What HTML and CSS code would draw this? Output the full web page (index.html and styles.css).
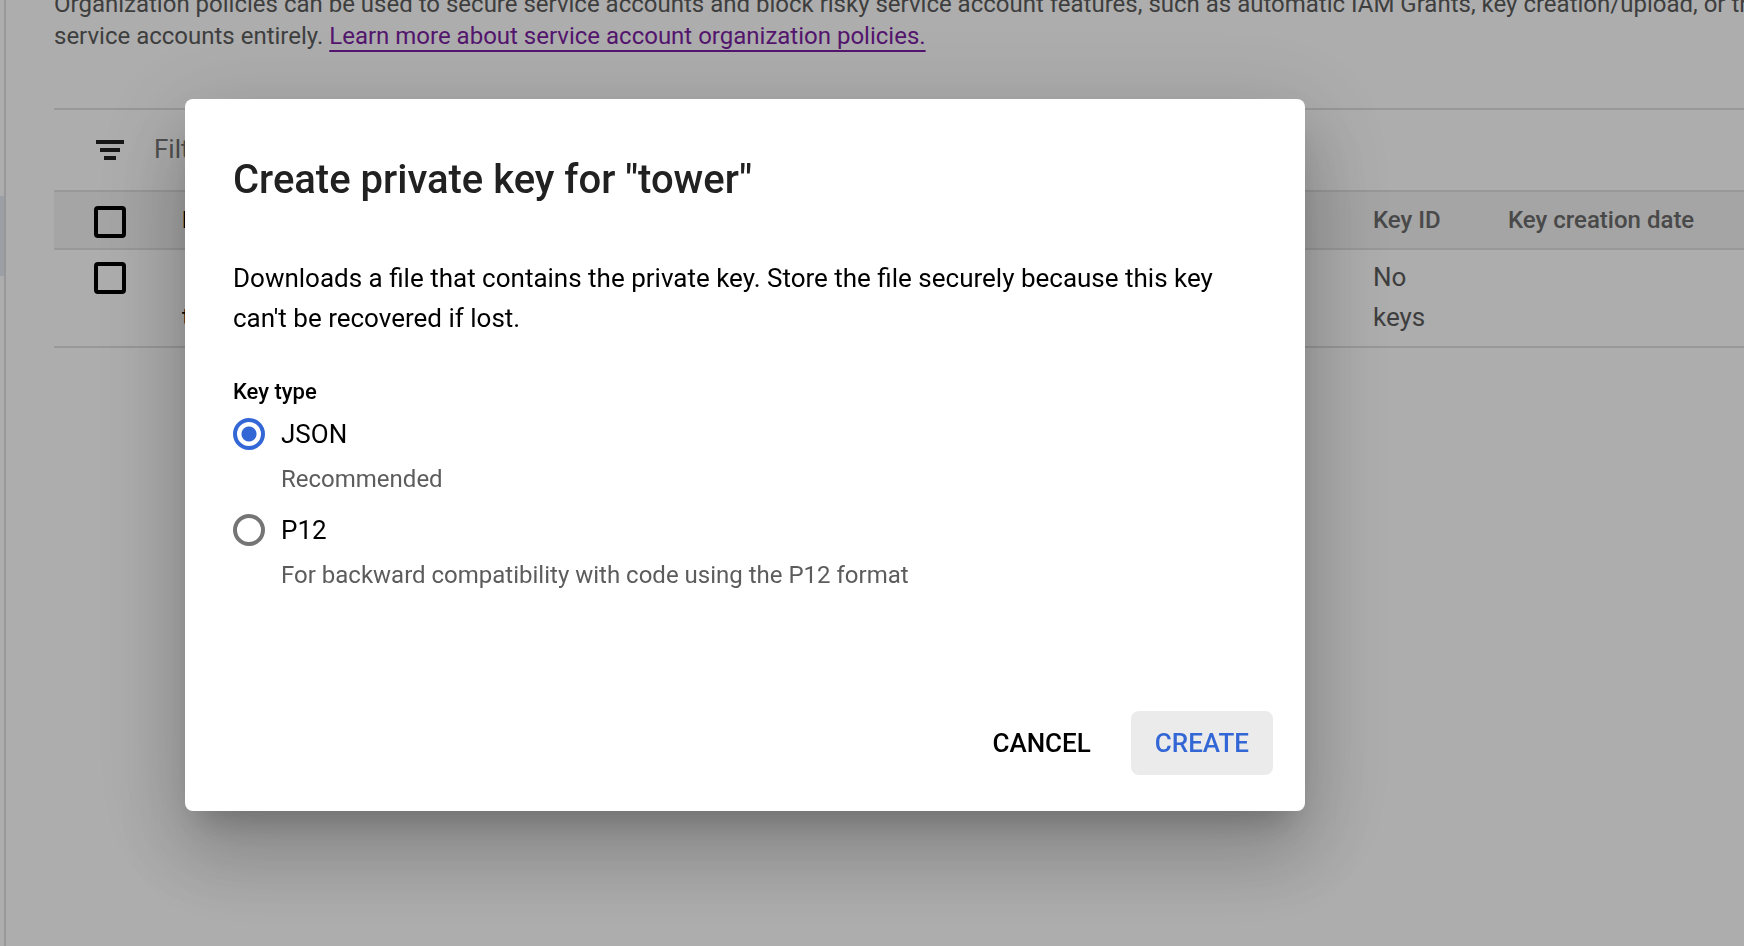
FILE: index.html
```html
<!DOCTYPE html>
<html lang="en">
<head>
<meta charset="utf-8">
<title>Service account keys</title>
<link rel="stylesheet" href="styles.css">
</head>
<body>
<div class="page">
  <nav class="side-nav"><div class="side-nav-active"></div></nav>
  <main class="content">
    <p class="intro">Organization policies can be used to secure service accounts and block risky service account features, such as automatic IAM Grants, key creation/upload, or the<br>service accounts entirely. <a class="intro-link" href="#">Learn more about service account organization policies.</a></p>
    <div class="filter-bar">
      <svg class="filter-icon" viewBox="0 0 28 20" aria-hidden="true"><path d="M0 0h28v4H0zM4 8h20v4H4zM8 16h12v4H8z"/></svg>
      <input class="filter-input" type="text" placeholder="Filter" aria-label="Filter">
    </div>
    <table class="keys-table">
      <thead>
        <tr>
          <th class="col-check"><input class="checkbox" type="checkbox" aria-label="Select all"></th>
          <th class="col-email">Email</th>
          <th class="col-key">Key ID</th>
          <th class="col-date">Key creation date</th>
        </tr>
      </thead>
      <tbody>
        <tr>
          <td><input class="checkbox" type="checkbox" aria-label="Select tower"></td>
          <td class="cell-email">tower</td>
          <td>No<br>keys</td>
          <td></td>
        </tr>
      </tbody>
    </table>
  </main>
</div>
<div class="backdrop">
  <form class="dialog" role="dialog" aria-modal="true" aria-labelledby="dialog-title">
    <h1 class="dialog-title" id="dialog-title">Create private key for "tower"</h1>
    <p class="dialog-text">Downloads a file that contains the private key. Store the file securely because this key can't be recovered if lost.</p>
    <fieldset class="key-type">
      <legend class="key-type-title">Key type</legend>
      <div class="option">
        <input class="radio" type="radio" name="key-type" id="type-json" checked>
        <label class="option-label" for="type-json">JSON</label>
        <span class="option-hint">Recommended</span>
      </div>
      <div class="option">
        <input class="radio" type="radio" name="key-type" id="type-p12">
        <label class="option-label" for="type-p12">P12</label>
        <span class="option-hint">For backward compatibility with code using the P12 format</span>
      </div>
    </fieldset>
    <div class="actions">
      <button class="button" type="button">CANCEL</button>
      <button class="button button-primary" type="button">CREATE</button>
    </div>
  </form>
</div>
</body>
</html>
```
FILE: styles.css
```css
* { box-sizing: border-box; }

body {
  margin: 0;
  font-family: Roboto, "Liberation Sans", sans-serif;
  font-size: 26px;
  line-height: 40px;
  color: #000;
  background: #fff;
}

.page {
  display: flex;
  height: 100vh;
  overflow: hidden;
}

.side-nav {
  flex: 0 0 6px;
  padding-top: 196px;
  border-right: 2px solid #e0e0e0;
}

.side-nav-active {
  height: 80px;
  background: #e8eaf6;
}

.content {
  flex: 1;
  min-width: 0;
  margin-top: -12px;
  padding-left: 48px;
}

.intro {
  margin: 0 0 56px;
  font-size: 24px;
  line-height: 32px;
  white-space: nowrap;
  color: #5c5c5c;
}

.intro-link {
  color: #7b1fa2;
  text-decoration: underline 2px;
  text-decoration-skip-ink: none;
  text-underline-offset: 6px;
}

.filter-bar {
  display: flex;
  align-items: center;
  gap: 28px;
  height: 82px;
  padding-left: 42px;
  border-top: 2px solid #e0e0e0;
}

.filter-icon {
  width: 28px;
  height: 20px;
  fill: #212121;
}

.filter-input {
  flex: 1;
  border: 0;
  padding: 0 2px 2px;
  font: inherit;
  background: none;
}

.filter-input::placeholder { color: #757575; }

.keys-table {
  width: 100%;
  table-layout: fixed;
  border-collapse: separate;
  border-spacing: 0;
  border-top: 2px solid #e0e0e0;
}

.keys-table th,
.keys-table td {
  padding: 0;
  text-align: left;
  vertical-align: top;
  border-bottom: 2px solid #e0e0e0;
}

.keys-table th {
  height: 58px;
  padding-top: 9px;
  font-size: 24px;
  line-height: 38px;
  font-weight: 500;
  color: #6c6c6c;
  background: #f3f3f3;
}

.keys-table td {
  height: 98px;
  padding-top: 7px;
  color: #5c5c5c;
}

.keys-table .col-check { width: 128px; }
.keys-table .col-email { color: #000; }
.keys-table .col-key { width: 135px; }
.keys-table .col-date { width: 236px; }
.keys-table .cell-email { padding-top: 47px; font-size: 24px; color: #000; }

.checkbox {
  appearance: none;
  display: block;
  width: 32px;
  height: 32px;
  margin: 5px 0 0 40px;
  border: 4px solid #000;
  border-radius: 4px;
}

.backdrop {
  position: fixed;
  inset: 0;
  padding: 99px 24px 0 185px;
  overflow: hidden;
  background: rgba(0, 0, 0, 0.32);
}

.dialog {
  max-width: 1120px;
  padding: 49px 32px 36px 48px;
  border-radius: 8px;
  background: #fff;
  box-shadow:
    0 22px 30px -14px rgba(0, 0, 0, 0.2),
    0 48px 76px 6px rgba(0, 0, 0, 0.14),
    0 18px 92px 16px rgba(0, 0, 0, 0.12);
}

.dialog-title {
  margin: 0 0 46px;
  font-size: 40px;
  line-height: 64px;
  font-weight: 500;
  color: #212121;
}

.dialog-text {
  max-width: 1010px;
  margin: 0 0 36px;
}

.key-type {
  min-width: 0;
  margin: 0;
  padding: 0;
  border: 0;
}

.key-type-title {
  padding: 0;
  font-size: 22px;
  line-height: 36px;
  font-weight: 500;
}

.option {
  display: grid;
  grid-template-columns: 32px 1fr;
  column-gap: 16px;
  align-items: center;
  height: 96px;
  grid-template-rows: 48px 42px;
}

.radio {
  appearance: none;
  width: 32px;
  height: 32px;
  margin: 0;
  border: 4px solid #757575;
  border-radius: 50%;
}

.radio:checked {
  border-color: #3367d6;
  background: radial-gradient(circle, #3367d6 7px, transparent 8px);
}

.option-hint {
  grid-column: 2;
  font-size: 24px;
  color: #5c5c5c;
}

.actions {
  display: flex;
  justify-content: flex-end;
  gap: 16px;
  margin-top: 109px;
}

.button {
  height: 64px;
  padding: 0 24px;
  border: 0;
  border-radius: 8px;
  font: inherit;
  font-weight: 500;
  color: #000;
  background: none;
}

.button-primary {
  color: #3367d6;
  background: #ebebeb;
}
```
